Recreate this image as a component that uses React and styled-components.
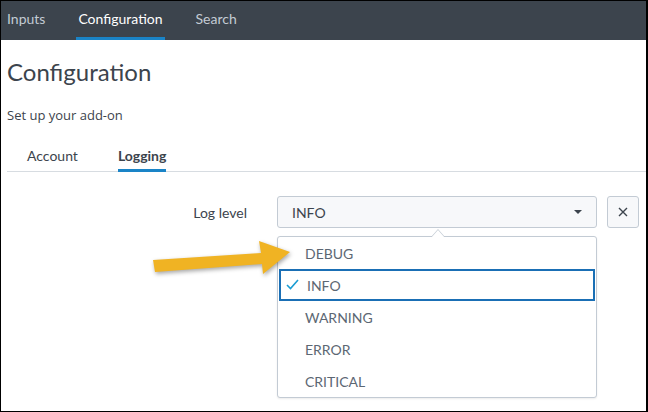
import React from "react"
import styled, { createGlobalStyle } from "styled-components"

const GlobalStyle = createGlobalStyle`
  html, body {
    margin: 0;
    padding: 0;
    background: #fff;
  }
  body {
    font-family: Lato, "Open Sans", "Liberation Sans", sans-serif;
  }
`

const Frame = styled("div")`
  position: relative;
  width: 648px;
  height: 412px;
  box-sizing: border-box;
  border: 1px solid #000;
  border-right-width: 2px;
  overflow: hidden;
  background: #fff;
`

const NavBar = styled("nav")`
  display: flex;
  gap: 29px;
  height: 39px;
  padding-left: 4px;
  background: #3c444d;
`

const NavTab = styled("a")`
  display: flex;
  align-items: center;
  padding: 0 2px 2px;
  box-sizing: border-box;
  font-size: 14px;
  color: ${p => (p.active ? "#ffffff" : "#c3cbd4")};
  border-bottom: 3px solid ${p => (p.active ? "#1a84c7" : "transparent")};
`

const Content = styled("main")`
  padding: 15px 0 0 6px;
`

const Title = styled("h1")`
  margin: 0;
  font-size: 24px;
  font-weight: 400;
  color: #3c444d;
  line-height: 34px;
`

const Subtitle = styled("p")`
  margin: 18px 0 0;
  font-family: "Open Sans", Lato, sans-serif;
  font-size: 13px;
  color: #3c444d;
  line-height: 16px;
`

const SubTabs = styled("div")`
  display: flex;
  gap: 40px;
  margin-top: 16px;
  padding-left: 20px;
  border-bottom: 1px solid #d7dce1;
`

const SubTab = styled("a")`
  padding: 8px 0 5px;
  font-size: 14px;
  font-weight: ${p => (p.active ? 700 : 400)};
  color: #3c444d;
  border-bottom: 3px solid ${p => (p.active ? "#1a84c7" : "transparent")};
  margin-bottom: -1px;
`

const FieldRow = styled("div")`
  display: flex;
  align-items: center;
  margin-top: 24px;
`

const Label = styled("label")`
  width: 270px;
  padding-right: 30px;
  box-sizing: border-box;
  text-align: right;
  font-size: 14px;
  color: #3c444d;
`

const SelectWrap = styled("div")`
  position: relative;
  width: 320px;
`

const Select = styled("div")`
  display: flex;
  align-items: center;
  justify-content: space-between;
  height: 32px;
  box-sizing: border-box;
  padding: 0 14px 0 14px;
  background: #f7f8fa;
  border: 1px solid #c3cbd4;
  border-radius: 3px;
  font-size: 14px;
  color: #3c444d;
`

const Caret = styled("span")`
  width: 0;
  height: 0;
  border-left: 4px solid transparent;
  border-right: 4px solid transparent;
  border-top: 4px solid #3c444d;
`

const ClearButton = styled("button")`
  display: flex;
  align-items: center;
  justify-content: center;
  width: 32px;
  height: 32px;
  margin-left: 10px;
  padding: 0;
  background: #f7f8fa;
  border: 1px solid #c3cbd4;
  border-radius: 3px;
  color: #3c444d;
`

const Menu = styled("ul")`
  position: absolute;
  top: 40px;
  left: 0;
  right: 0;
  margin: 0;
  padding: 0;
  list-style: none;
  background: #fff;
  border: 1px solid #c3cbd4;
  border-radius: 3px;
  box-shadow: 0 1px 2px rgba(0, 0, 0, 0.08);

  &::before,
  &::after {
    content: "";
    position: absolute;
    left: 153px;
    width: 0;
    height: 0;
    border-left: 7px solid transparent;
    border-right: 7px solid transparent;
  }
  &::before {
    top: -8px;
    border-bottom: 8px solid #c3cbd4;
  }
  &::after {
    top: -7px;
    border-bottom: 8px solid #fff;
  }
`

const MenuItem = styled("li")`
  position: relative;
  display: flex;
  align-items: center;
  height: 32px;
  box-sizing: border-box;
  margin: ${p => (p.selected ? "0 1px" : "0")};
  padding-left: ${p => (p.selected ? "26px" : "27px")};
  font-size: 14px;
  color: #5c6773;
  border: ${p => (p.selected ? "2px solid #1a6fb5" : "none")};
`

const Check = styled("svg")`
  position: absolute;
  left: 5px;
  top: 8px;
`

const Arrow = styled("svg")`
  position: absolute;
  left: 148px;
  top: 234px;
  filter: drop-shadow(1px 2px 2px rgba(0, 0, 0, 0.35));
`

const levels = ["DEBUG", "INFO", "WARNING", "ERROR", "CRITICAL"]

const App = () => (
  <>
    <GlobalStyle />
    <Frame>
      <NavBar>
        <NavTab>Inputs</NavTab>
        <NavTab active>Configuration</NavTab>
        <NavTab>Search</NavTab>
      </NavBar>
      <Content>
        <Title>Configuration</Title>
        <Subtitle>Set up your add-on</Subtitle>
        <SubTabs>
          <SubTab>Account</SubTab>
          <SubTab active>Logging</SubTab>
        </SubTabs>
        <FieldRow>
          <Label>Log level</Label>
          <SelectWrap>
            <Select>
              <span>INFO</span>
              <Caret />
            </Select>
            <Menu>
              {levels.map(l => (
                <MenuItem key={l} selected={l === "INFO"}>
                  {l === "INFO" && (
                    <Check width="13" height="11" viewBox="0 0 13 11">
                      <path
                        d="M1 6 L4.5 9.5 L12 1"
                        fill="none"
                        stroke="#1a9cd3"
                        strokeWidth="1.6"
                      />
                    </Check>
                  )}
                  {l}
                </MenuItem>
              ))}
            </Menu>
          </SelectWrap>
          <ClearButton>
            <svg width="10" height="10" viewBox="0 0 10 10">
              <path d="M1 1 L9 9 M9 1 L1 9" stroke="#3c444d" strokeWidth="1.4" />
            </svg>
          </ClearButton>
        </FieldRow>
      </Content>
      <Arrow width="150" height="46" viewBox="0 0 150 46">
        <polygon
          points="4,25 112,18 110,6 141,17 114,39 113,29 6,37"
          fill="#f0b323"
        />
      </Arrow>
    </Frame>
  </>
)

export default App
